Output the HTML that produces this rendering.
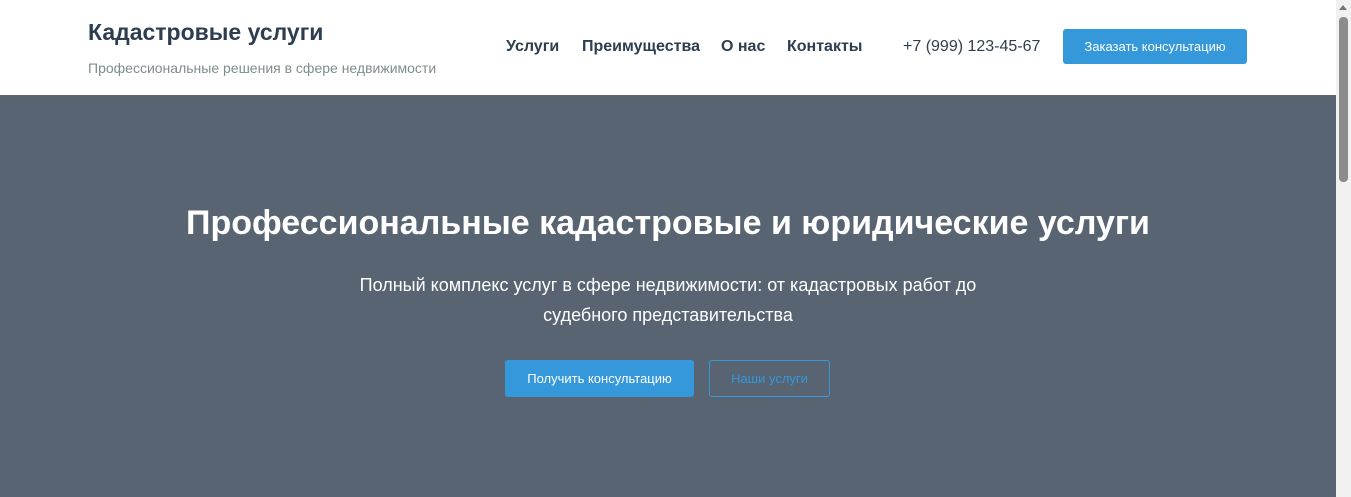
<!DOCTYPE html>
<html><head><meta charset="utf-8"><style>
*{margin:0;padding:0;box-sizing:border-box}
body{width:1351px;height:497px;overflow:hidden;font-family:"Liberation Sans",sans-serif;background:#586471;position:relative}
header{position:absolute;left:0;top:0;width:1336px;height:95px;background:#fff}
.logo{position:absolute;left:88px;top:19px;font-size:23px;font-weight:bold;color:#2c3e50}
.sub{position:absolute;left:88px;top:60px;font-size:14px;color:#7f8c8d}
nav a{position:absolute;top:38px;font-size:16px;color:#2c3e50;text-decoration:none;font-weight:600}
.phone{position:absolute;left:903px;top:38px;font-size:16px;color:#2c3e50}
.hbtn{position:absolute;left:1063px;top:29px;width:184px;height:35px;background:#3498db;border-radius:3px;color:#fff;font-size:13px;text-align:center;line-height:35px}
.sb{position:absolute;left:1336px;top:0;width:15px;height:497px;background:#f1f1f1}
.sb .th{position:absolute;left:3px;top:17px;width:9px;height:165px;background:#8c8c8c;border-radius:4px}
.sb .ar{position:absolute;left:3px;top:5px;width:0;height:0;border-left:4px solid transparent;border-right:4px solid transparent;border-bottom:5px solid #777}
h1{position:absolute;left:0;width:1336px;top:204px;text-align:center;color:#fff;font-size:34px;font-weight:bold}
.p{position:absolute;left:0;width:1336px;top:270px;text-align:center;color:#fff;font-size:18px;line-height:30px}
.b1{position:absolute;left:505px;top:360px;width:189px;height:37px;background:#3498db;border-radius:3px;color:#fff;font-size:13px;text-align:center;line-height:37px}
.b2{position:absolute;left:709px;top:360px;width:121px;height:37px;border:1px solid #3498db;border-radius:3px;color:#3498db;font-size:13px;text-align:center;line-height:35px}
</style></head><body>
<header>
<div class="logo">Кадастровые услуги</div>
<div class="sub">Профессиональные решения в сфере недвижимости</div>
<nav><a style="left:506px">Услуги</a><a style="left:582px">Преимущества</a><a style="left:721px">О нас</a><a style="left:787px">Контакты</a></nav>
<div class="phone">+7 (999) 123-45-67</div>
<div class="hbtn">Заказать консультацию</div>
</header>
<h1>Профессиональные кадастровые и юридические услуги</h1>
<div class="p">Полный комплекс услуг в сфере недвижимости: от кадастровых работ до<br>судебного представительства</div>
<div class="b1">Получить консультацию</div>
<div class="b2">Наши услуги</div>
<div class="sb"><div class="ar"></div><div class="th"></div></div>
</body></html>
